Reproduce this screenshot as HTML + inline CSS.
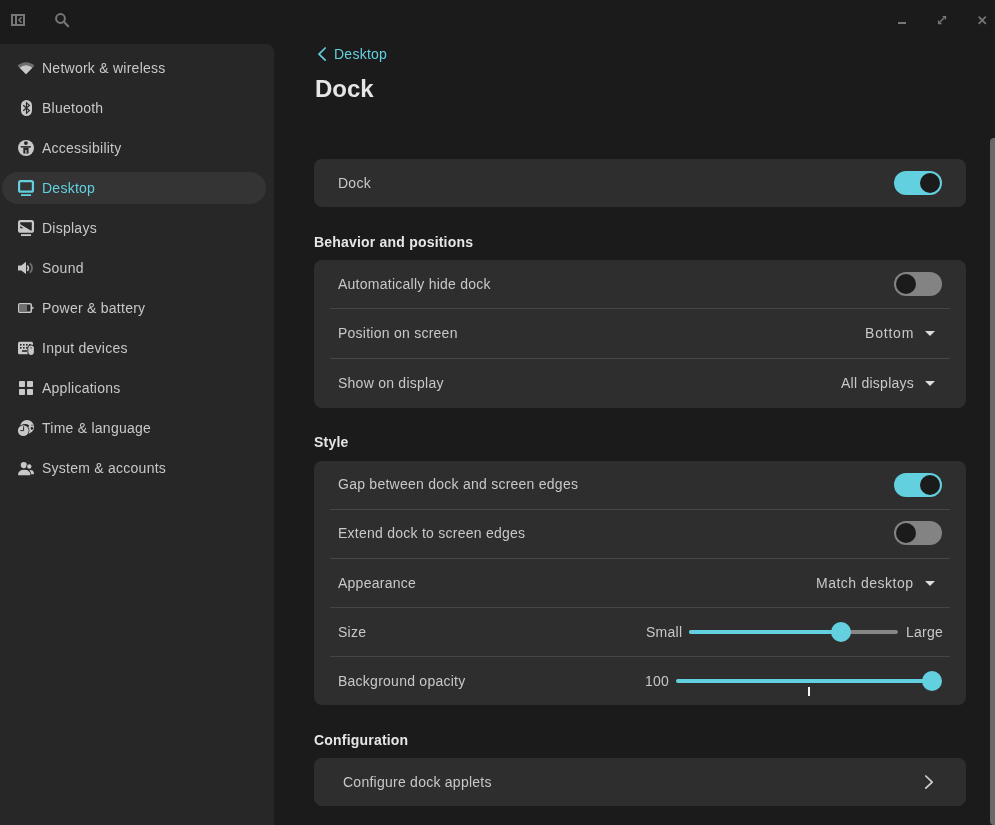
<!DOCTYPE html>
<html><head><meta charset="utf-8">
<style>
html,body{margin:0;padding:0;}
body{width:995px;height:825px;overflow:hidden;background:#1b1b1b;position:relative;font-family:"Liberation Sans",sans-serif;color:#c8c8c8;}
.a{position:absolute;}
.t{position:absolute;will-change:transform;font-size:14px;line-height:20px;white-space:nowrap;letter-spacing:0.25px;}
.b{font-weight:700;color:#e6e6e6;letter-spacing:0.2px;}
.side{position:absolute;left:0;top:44px;width:274px;height:800px;background:#272727;border-radius:0 8px 0 0;}
.sel{position:absolute;left:2px;top:172px;width:264px;height:32px;border-radius:16px;background:#343434;}
.card{position:absolute;left:314px;width:652px;background:#2e2e2e;border-radius:8px;}
.sep{position:absolute;left:330px;width:620px;height:1px;background:#464646;}
.tog{position:absolute;width:48px;height:24px;border-radius:12px;box-sizing:border-box;}
.tog.on{background:#63d0df;}
.tog.off{background:#838383;}
.knob{position:absolute;top:2px;width:20px;height:20px;border-radius:10px;background:#1b1b1b;}
.on .knob{left:26px;}
.off .knob{left:2px;}
.caret{position:absolute;width:0;height:0;border-left:5px solid transparent;border-right:5px solid transparent;border-top:5px solid #dcdcdc;}
svg{position:absolute;overflow:visible;}
</style></head><body>

<!-- header icons -->
<svg style="left:0;top:0" width="80" height="40" viewBox="0 0 80 40">
  <rect x="12" y="15" width="12" height="10" fill="none" stroke="#777777" stroke-width="2"/>
  <rect x="15" y="16" width="2" height="8" fill="#777777"/>
  <path d="M21.5 17.2 L19 20 L21.5 22.8" fill="none" stroke="#777777" stroke-width="1.6"/>
  <circle cx="60.5" cy="18.5" r="4.4" fill="none" stroke="#777777" stroke-width="2"/>
  <path d="M63.8 21.8 L68.2 26.2" stroke="#777777" stroke-width="2.2" stroke-linecap="round"/>
</svg>

<svg style="left:880px;top:0" width="115" height="40" viewBox="880 0 115 40">
  <rect x="898" y="22" width="8" height="2" fill="#777777"/>
  <path d="M939.2 22.8 L945 17" stroke="#777777" stroke-width="1.3"/>
  <path d="M942.6 16.6 L945.5 16.6 L945.5 19.5" fill="none" stroke="#777777" stroke-width="1.3"/>
  <path d="M938.6 20.6 L938.6 23.5 L941.5 23.5" fill="none" stroke="#777777" stroke-width="1.3"/>
  <path d="M978.7 16.7 L985.8 23.8 M985.8 16.7 L978.7 23.8" stroke="#777777" stroke-width="1.7"/>
</svg>

<!-- sidebar -->
<div class="side"></div>
<div class="sel"></div>
<svg style="left:18px;top:60px" width="16" height="16" viewBox="0 0 16 16"><path d="M8 14.2 L-0.49 5.71 A12 12 0 0 1 16.49 5.71 Z" fill="#6e6e6e"/><path d="M8 14.2 L1.64 7.84 A9 9 0 0 1 14.36 7.84 Z" fill="#c8c8c8"/></svg>
<div class="t" style="left:42px;top:58px;color:#c8c8c8;">Network &amp; wireless</div>
<svg style="left:18px;top:100px" width="16" height="16" viewBox="0 0 16 16"><rect x="3" y="0" width="11" height="16" rx="5.5" fill="#c8c8c8"/><path d="M5.2 5.2 L11.4 10.6 L8.5 13.2 L8.5 2.8 L11.4 5.4 L5.2 10.8" fill="none" stroke="#272727" stroke-width="1.2" stroke-linejoin="miter"/></svg>
<div class="t" style="left:42px;top:98px;color:#c8c8c8;">Bluetooth</div>
<svg style="left:18px;top:140px" width="16" height="16" viewBox="0 0 16 16"><circle cx="8" cy="8" r="8" fill="#c8c8c8"/><circle cx="7.9" cy="3.1" r="1.9" fill="#272727"/><rect x="2.7" y="6.1" width="10.2" height="1.5" fill="#272727"/><rect x="5.3" y="7.5" width="5.3" height="6" fill="#272727"/><rect x="7" y="9.9" width="1.9" height="3.6" fill="#8a8a8a"/></svg>
<div class="t" style="left:42px;top:138px;color:#c8c8c8;">Accessibility</div>
<svg style="left:18px;top:180px" width="16" height="16" viewBox="0 0 16 16"><rect x="1.1" y="1.1" width="13.8" height="10.6" rx="1.5" fill="none" stroke="#63d0df" stroke-width="2.2"/><rect x="3" y="14.2" width="10" height="1.8" fill="#63d0df"/></svg>
<div class="t" style="left:42px;top:178px;color:#63d0df;">Desktop</div>
<svg style="left:18px;top:220px" width="16" height="16" viewBox="0 0 16 16"><rect x="1.1" y="1.1" width="13.8" height="10.6" rx="1.5" fill="none" stroke="#c8c8c8" stroke-width="2.2"/><rect x="3" y="14.2" width="10" height="1.8" fill="#c8c8c8"/><path d="M0 2.9 L0 11 L12.5 11 L11.5 9.8 Z" fill="#c8c8c8"/><path d="M2.2 6 L2.2 8.2 L5.5 8.2 Z" fill="#272727"/></svg>
<div class="t" style="left:42px;top:218px;color:#c8c8c8;">Displays</div>
<svg style="left:18px;top:260px" width="16" height="16" viewBox="0 0 16 16"><path d="M0 5.5 L3.3 5.5 L8 1.8 L8 14 L3.3 10.5 L0 10.5 Z" fill="#c8c8c8"/><path d="M9.2 5.6 A3.5 3.5 0 0 1 9.2 10.8" fill="none" stroke="#c8c8c8" stroke-width="1.8"/><path d="M11.8 3.3 A6 6 0 0 1 11.8 12.7" fill="none" stroke="#6e6e6e" stroke-width="1.8"/></svg>
<div class="t" style="left:42px;top:258px;color:#c8c8c8;">Sound</div>
<svg style="left:18px;top:300px" width="16" height="16" viewBox="0 0 16 16"><rect x="0.75" y="3.65" width="12.5" height="8.7" rx="1.2" fill="none" stroke="#c8c8c8" stroke-width="1.5"/><rect x="1.5" y="4.4" width="7.5" height="7.2" fill="#707070"/><path d="M14.2 6.2 L16 7.9 L14.2 9.6 Z" fill="#c8c8c8"/></svg>
<div class="t" style="left:42px;top:298px;color:#c8c8c8;">Power &amp; battery</div>
<svg style="left:18px;top:340px" width="16" height="16" viewBox="0 0 16 16"><rect x="0" y="1.8" width="15" height="12.4" rx="1.5" fill="#c8c8c8"/><rect x="2" y="4" width="1.6" height="1.6" fill="#272727"/><rect x="5" y="4" width="1.6" height="1.6" fill="#272727"/><rect x="8" y="4" width="1.6" height="1.6" fill="#272727"/><rect x="11" y="4" width="1.6" height="1.6" fill="#272727"/><rect x="2" y="7" width="1.6" height="1.6" fill="#272727"/><rect x="5" y="7" width="1.6" height="1.6" fill="#272727"/><rect x="8" y="7" width="1.6" height="1.6" fill="#272727"/><rect x="4" y="10.2" width="5" height="1.6" fill="#272727"/><rect x="9.4" y="4.6" width="7.2" height="11.2" rx="3.6" fill="#272727"/><rect x="10.3" y="5.5" width="5.6" height="9.4" rx="2.8" fill="#c8c8c8"/><rect x="12.5" y="7" width="1.3" height="2" fill="#777"/></svg>
<div class="t" style="left:42px;top:338px;color:#c8c8c8;">Input devices</div>
<svg style="left:18px;top:380px" width="16" height="16" viewBox="0 0 16 16"><rect x="1" y="1" width="6" height="6" rx="0.8" fill="#c8c8c8"/><rect x="9" y="1" width="6" height="6" rx="0.8" fill="#c8c8c8"/><rect x="1" y="9" width="6" height="6" rx="0.8" fill="#c8c8c8"/><rect x="9" y="9" width="6" height="6" rx="0.8" fill="#c8c8c8"/></svg>
<div class="t" style="left:42px;top:378px;color:#c8c8c8;">Applications</div>
<svg style="left:18px;top:420px" width="16" height="16" viewBox="0 0 16 16"><circle cx="9" cy="6.9" r="7" fill="#c8c8c8"/><path d="M4.2 5 Q6 3.6 8.5 4 Q10.5 4.6 11.3 6 Q10 7.6 8 7.6 L4.5 7 Z" fill="#272727"/><ellipse cx="13.9" cy="8.3" rx="1.2" ry="1.5" fill="#272727"/><circle cx="14" cy="5.2" r="0.6" fill="#272727"/><circle cx="5.3" cy="10.6" r="6.1" fill="#272727"/><circle cx="5.3" cy="10.6" r="5.4" fill="#c8c8c8"/><path d="M5.6 6.3 L5.6 10.6 L2.4 10.6" fill="none" stroke="#272727" stroke-width="1"/></svg>
<div class="t" style="left:42px;top:418px;color:#c8c8c8;">Time &amp; language</div>
<svg style="left:18px;top:460px" width="16" height="16" viewBox="0 0 16 16"><circle cx="5.8" cy="5.1" r="3.1" fill="#c8c8c8"/><circle cx="11.3" cy="6.5" r="2.9" fill="#272727"/><circle cx="11.3" cy="6.5" r="2.2" fill="#c8c8c8"/><path d="M0 15.3 Q0 9.8 6.2 9.8 Q12.4 9.8 12.4 15.3 Z" fill="#c8c8c8"/><path d="M12.2 10 Q16 10 16 14.2 L13 14.2 Q13 11.5 11.5 10.4 Z" fill="#c8c8c8"/></svg>
<div class="t" style="left:42px;top:458px;color:#c8c8c8;">System &amp; accounts</div>

<!-- content -->
<svg style="left:314px;top:44px" width="16" height="20" viewBox="314 44 16 20">
  <path d="M325.2 48 L319 54.1 L325.2 60.2" fill="none" stroke="#63d0df" stroke-width="1.7" stroke-linecap="round" stroke-linejoin="round"/>
</svg>
<div class="t" style="left:334px;top:44px;color:#63d0df;">Desktop</div>
<div class="t b" style="left:315px;top:74px;font-size:24px;line-height:30px;letter-spacing:0;">Dock</div>

<div class="card" style="top:159px;height:48px;"></div>
<div class="t" style="left:338px;top:173px;">Dock</div>
<div class="tog on" style="left:894px;top:171px;"><div class="knob"></div></div>

<div class="t b" style="left:314px;top:232px;">Behavior and positions</div>
<div class="card" style="top:260px;height:148px;"></div>
<div class="t" style="left:338px;top:274px;">Automatically hide dock</div>
<div class="tog off" style="left:894px;top:272px;"><div class="knob"></div></div>
<div class="sep" style="top:308px"></div>
<div class="t" style="left:338px;top:323px;">Position on screen</div>
<div class="t" style="right:80.5px;top:323px;letter-spacing:0.8px;">Bottom</div>
<div class="caret" style="left:925px;top:331px;"></div>
<div class="sep" style="top:358px"></div>
<div class="t" style="left:338px;top:373px;">Show on display</div>
<div class="t" style="right:81px;top:373px;">All displays</div>
<div class="caret" style="left:925px;top:381px;"></div>

<div class="t b" style="left:314px;top:432px;">Style</div>
<div class="card" style="top:461px;height:244px;"></div>
<div class="t" style="left:338px;top:474px;">Gap between dock and screen edges</div>
<div class="tog on" style="left:894px;top:473px;"><div class="knob"></div></div>
<div class="sep" style="top:509px"></div>
<div class="t" style="left:338px;top:523px;">Extend dock to screen edges</div>
<div class="tog off" style="left:894px;top:521px;"><div class="knob"></div></div>
<div class="sep" style="top:558px"></div>
<div class="t" style="left:338px;top:573px;">Appearance</div>
<div class="t" style="right:81px;top:573px;letter-spacing:0.5px;">Match desktop</div>
<div class="caret" style="left:925px;top:581px;"></div>
<div class="sep" style="top:607px"></div>
<div class="t" style="left:338px;top:622px;">Size</div>
<div class="t" style="left:646px;top:622px;">Small</div>
<div class="a" style="left:689px;top:630px;width:209px;height:4px;border-radius:2px;background:#868686;"></div>
<div class="a" style="left:689px;top:630px;width:150px;height:4px;border-radius:2px;background:#63d0df;"></div>
<div class="a" style="left:831px;top:622px;width:20px;height:20px;border-radius:10px;background:#63d0df;"></div>
<div class="t" style="left:906px;top:622px;">Large</div>
<div class="sep" style="top:656px"></div>
<div class="t" style="left:338px;top:671px;">Background opacity</div>
<div class="t" style="left:645px;top:671px;">100</div>
<div class="a" style="left:676px;top:679px;width:260px;height:4px;border-radius:2px;background:#63d0df;"></div>
<div class="a" style="left:922px;top:671px;width:20px;height:20px;border-radius:10px;background:#63d0df;"></div>
<div class="a" style="left:808px;top:687px;width:2px;height:9px;background:#f4f4f4;"></div>

<div class="t b" style="left:314px;top:730px;">Configuration</div>
<div class="card" style="top:758px;height:48px;"></div>
<div class="t" style="left:343px;top:772px;">Configure dock applets</div>
<svg style="left:920px;top:770px" width="20" height="24" viewBox="920 770 20 24">
  <path d="M925.8 776 L932.2 782.1 L925.8 788.2" fill="none" stroke="#d0d0d0" stroke-width="1.7" stroke-linecap="round" stroke-linejoin="round"/>
</svg>

<!-- scrollbar -->
<div class="a" style="left:990px;top:138px;width:10px;height:687px;border-radius:4px 0 0 4px;background:#686868;"></div>

</body></html>
